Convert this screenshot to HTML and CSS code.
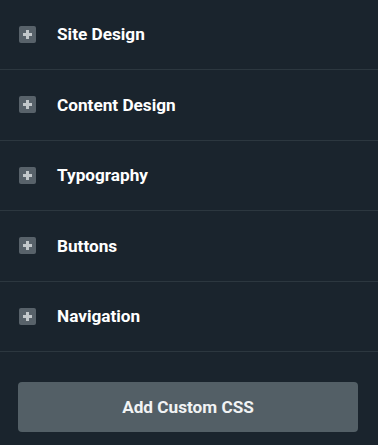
FILE: index.html
```html
<!DOCTYPE html>
<html>
<head>
<meta charset="utf-8">
<link rel="stylesheet" href="styles.css">
</head>
<body>
<div class="panel">
  <div class="row"><span class="ic"></span><span class="label">Site Design</span></div>
  <div class="row"><span class="ic"></span><span class="label">Content Design</span></div>
  <div class="row"><span class="ic"></span><span class="label">Typography</span></div>
  <div class="row"><span class="ic"></span><span class="label">Buttons</span></div>
  <div class="row"><span class="ic"></span><span class="label">Navigation</span></div>
  <div class="footer"><button class="btn">Add Custom CSS</button></div>
</div>
</body>
</html>
```
FILE: styles.css
```css
html, body {
  margin: 0;
  padding: 0;
  background: #1a242d;
  height: 100%;
  overflow: hidden;
}
.panel {
  font-family: Roboto, "Liberation Sans", sans-serif;
  margin-top: -0.5px;
}
.row {
  display: flex;
  align-items: center;
  gap: 21px;
  height: 69.5px;
  padding-left: 19px;
  border-bottom: 1px solid #2c373f;
}
.ic {
  width: 17px;
  height: 17px;
  border-radius: 2px;
  background: #58626a;
  position: relative;
  flex: none;
}
.ic::before, .ic::after {
  content: "";
  position: absolute;
  background: #c3c8cb;
}
.ic::before {
  left: 4px; right: 4px; top: 7px; height: 3px;
}
.ic::after {
  top: 4px; bottom: 4px; left: 7px; width: 3px;
}
.label {
  color: #ffffff;
  font-size: 17.2px;
  font-weight: 700;
}
.footer {
  padding: 30px 20px 0 18px;
}
.btn {
  display: block;
  width: 340px;
  height: 50px;
  border: 0;
  border-radius: 4px;
  background: #535f66;
  color: #f1f3f4;
  font-family: Roboto, "Liberation Sans", sans-serif;
  font-size: 17.2px;
  font-weight: 700;
  padding: 0;
}
```
